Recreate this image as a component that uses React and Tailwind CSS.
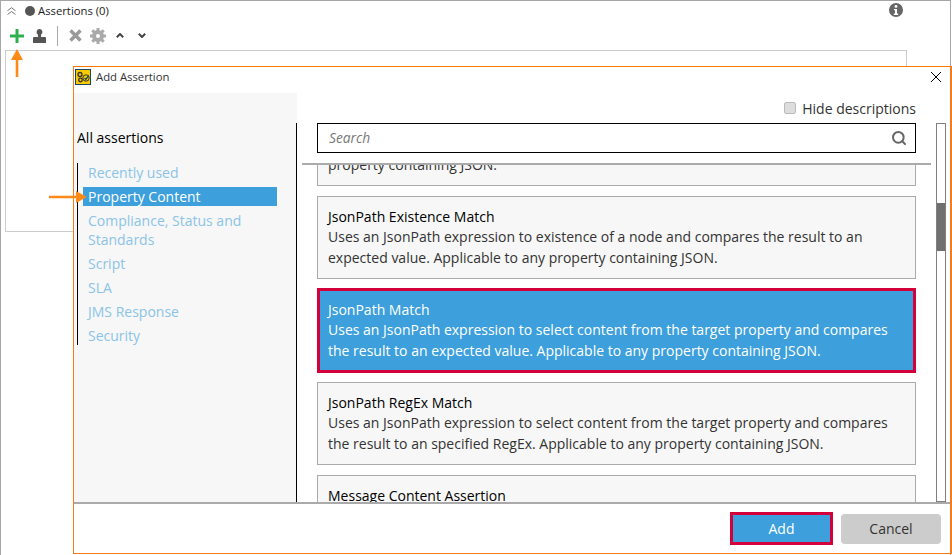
import React from 'react';
import { Search } from 'lucide-react';

const categories = [
  { label: 'Recently used' },
  { label: 'Property Content', active: true },
  { label: 'Compliance, Status and Standards' },
  { label: 'Script' },
  { label: 'SLA' },
  { label: 'JMS Response' },
  { label: 'Security' },
];

const AssertionCard = ({ title, lines = [], selected, className = '' }) => (
  <div className={`shrink-0 ${selected ? 'border-[3px] border-[#d3003b] bg-[#3d9fdb] pb-[9px] pl-[8px] pt-[9px] text-white' : 'border border-[#aaaaaa] bg-[#f7f7f7] pb-[10px] pl-[10px] pt-[10px] text-[#333333]'} ${className}`}>
    {title && <div className={`text-[14px] leading-[20px] ${selected ? 'font-medium' : 'text-black'}`}>{title}</div>}
    {lines.map((line) => (
      <div key={line} className="whitespace-nowrap text-[14px] leading-[20.5px]">{line}</div>
    ))}
  </div>
);

const App = () => {
  return (
    <div className="relative h-[555px] w-[952px] overflow-hidden bg-white font-['Open_Sans',sans-serif]">
      <div className="h-[555px] w-[951px] border-x border-t border-[#a6a6a6]">
        <div className="flex h-[20px] items-center pl-[6px]">
          <svg viewBox="0 0 9 8" className="h-[8px] w-[9px]">
            <path d="M.5 3.700L4.500 .7l4 3M.5 7.500l4-3 4 3" stroke="#777777" strokeWidth="1" fill="none" />
          </svg>
          <span className="ml-[9px] h-[10px] w-[10px] rounded-full bg-[#555555]" />
          <span className="ml-[3px] text-[11.3px] text-[#222222]">Assertions (0)</span>
        </div>

        <div className="flex h-[29px] items-center pl-[9px]">
          <svg viewBox="0 0 14 14" className="h-[14px] w-[14px]">
            <path d="M5.500 0h3v5.500H14v3H8.500V14h-3V8.500H0v-3h5.500z" fill="#2fb04f" />
          </svg>
          <svg viewBox="0 0 13 14" className="ml-[9px] h-[14px] w-[13px]">
            <path d="M6.500 0a3 3 0 0 1 1.600 5.500V8H12a1 1 0 0 1 1 1v5H0V9a1 1 0 0 1 1-1h3.900V5.500A3 3 0 0 1 6.500 0z" fill="#555555" />
          </svg>
          <span className="ml-[11px] h-[20px] w-px bg-[#aaaaaa]" />
          <svg viewBox="0 0 13 13" className="ml-[11px] h-[13px] w-[13px]">
            <path d="M1.500 1.500l10 10M11.500 1.500l-10 10" stroke="#999999" strokeWidth="3.400" fill="none" />
          </svg>
          <svg viewBox="0 0 16 16" className="ml-[8px] h-[16px] w-[16px]">
            <circle cx="8" cy="8" r="4" fill="none" stroke="#aaaaaa" strokeWidth="4" />
            <path d="M8 0v4M8 12v4M0 8h4M12 8h4M2.300 2.300l2.800 2.800M10.900 10.900l2.800 2.800M13.700 2.300l-2.800 2.800M5.100 10.900l-2.800 2.800" stroke="#aaaaaa" strokeWidth="3" />
          </svg>
          <svg viewBox="0 0 8 5" className="ml-[10px] h-[5px] w-[8px]">
            <path d="M.8 4.200L4 1l3.200 3.200" stroke="#444444" strokeWidth="2" fill="none" />
          </svg>
          <svg viewBox="0 0 8 5" className="ml-[14px] h-[5px] w-[8px]">
            <path d="M.8 .8L4 4l3.200-3.200" stroke="#444444" strokeWidth="2" fill="none" />
          </svg>
        </div>

        <div className="ml-[4px] h-[182px] w-[902px] border border-[#cccccc]" />
      </div>

      <svg viewBox="0 0 14 14" className="absolute left-[889px] top-[3px] h-[14px] w-[14px]">
        <circle cx="7" cy="7" r="7" fill="#666666" />
        <circle cx="7" cy="3.400" r="1.400" fill="#ffffff" />
        <path d="M5 6h3v4.500h1.200V12H4.800v-1.500H6V7.300H5z" fill="#ffffff" />
      </svg>

      <svg viewBox="0 0 12 28" className="absolute left-[11px] top-[49px] h-[28px] w-[12px]">
        <path d="M6 0l6 11H7.300v17H4.700V11H0z" fill="#ff8a17" />
      </svg>

      <div className="absolute left-[73px] top-[66px] flex h-[488px] w-[879px] flex-col border border-r-2 border-[#f57b1f] border-t-[#ff7a00] bg-white">
        <div className="flex h-[26px] shrink-0 items-center pb-[6px] pl-[1px]">
          <svg viewBox="0 0 16 16" className="h-[16px] w-[16px]">
            <rect x=".5" y=".5" width="15" height="15" fill="#f7cb00" stroke="#1c4a5c" />
            <circle cx="5" cy="5.500" r="2" fill="none" stroke="#333333" strokeWidth="1.300" />
            <circle cx="5.500" cy="11" r="1.800" fill="none" stroke="#333333" strokeWidth="1.300" />
            <circle cx="11" cy="9" r="3.200" fill="none" stroke="#333333" strokeWidth="1" />
            <path d="M9.500 9l1.300 1.500 3-4" stroke="#1c4a5c" strokeWidth="1.300" fill="none" />
          </svg>
          <span className="ml-[5px] text-[11.3px] text-[#333333]">Add Assertion</span>
          <svg viewBox="0 0 10 10" className="ml-auto mr-[9px] h-[10px] w-[10px]">
            <path d="M0 0l10 10M10 0L0 10" stroke="#000000" strokeWidth="1" fill="none" />
          </svg>
        </div>

        <div className="flex min-h-0 flex-1">
          <div className="relative w-[223px] shrink-0 bg-[#f7f7f7] pl-[3px] pt-[35px]">
            <div className="text-[14px] leading-[20px] text-black">All assertions</div>
            <div className="mt-[15px] flex flex-col gap-[5px] border-l border-black pl-[5px]">
              {categories.map((cat) => (
                <div
                  key={cat.label}
                  className={`w-[194px] pl-[5px] text-[14px] leading-[19px] ${cat.active ? 'bg-[#3d9fdb] text-white' : 'text-[#8bc4e8]'}`}
                >
                  {cat.label}
                </div>
              ))}
            </div>
            <span className="absolute bottom-0 right-[0px] top-[30px] w-px bg-black" />
          </div>

          <div className="flex min-h-0 w-[653px] flex-col">
            <div className="flex h-[30px] shrink-0 items-center justify-end pr-[34px]">
              <span className="mb-[1px] h-[12px] w-[12px] rounded-[2px] border border-[#bbbbbb] bg-[#dddddd]" />
              <span className="ml-[6px] pt-[2px] text-[14px] leading-[20px] text-[#333333]">Hide descriptions</span>
            </div>

            <div className="flex min-h-0 flex-1 gap-[5px] pl-[5px] pr-[4px]">
              <div className="flex min-h-0 w-[629px] flex-col">
                <div className="mx-[15px] flex h-[30px] shrink-0 items-center justify-between border border-black pl-[11px] pr-[8px]">
                  <span className="text-[13.8px] italic leading-[18px] text-[#777777]">Search</span>
                  <Search className="h-[16px] w-[16px] text-[#666666]" strokeWidth={3} />
                </div>
                <div className="mt-[10px] flex min-h-0 flex-1 flex-col overflow-hidden border-t-2 border-[#aaaaaa] px-[15px]">
                  <AssertionCard
                    className="mb-[10px] mt-[-21.5px]"
                    lines={['property containing JSON.']}
                  />
                  <AssertionCard
                    className="mb-[9px]"
                    title="JsonPath Existence Match"
                    lines={['Uses an JsonPath expression to existence of a node and compares the result to an', 'expected value. Applicable to any property containing JSON.']}
                  />
                  <AssertionCard
                    selected
                    className="mb-[9px]"
                    title="JsonPath Match"
                    lines={['Uses an JsonPath expression to select content from the target property and compares', 'the result to an expected value. Applicable to any property containing JSON.']}
                  />
                  <AssertionCard
                    className="mb-[10px]"
                    title="JsonPath RegEx Match"
                    lines={['Uses an JsonPath expression to select content from the target property and compares', 'the result to an specified RegEx. Applicable to any property containing JSON.']}
                  />
                  <AssertionCard title="Message Content Assertion" />
                </div>
              </div>
              <div className="w-[10px] border border-[#808080] pt-[79px]">
                <div className="h-[48px] bg-[#707070]" />
              </div>
            </div>
          </div>
        </div>

        <div className="flex h-[51px] shrink-0 items-center justify-end gap-[8px] border-t-2 border-[#aaaaaa] pr-[9px]">
          <button className="h-[33px] w-[103px] border-[3px] border-[#d3003b] bg-[#3d9fdb] text-[14px] text-white">Add</button>
          <button className="h-[30px] w-[100px] rounded-[4px] bg-[#cccccc] text-[14px] text-[#333333]">Cancel</button>
        </div>
      </div>

      <svg viewBox="0 0 38 12" className="absolute left-[49px] top-[191px] h-[12px] w-[38px]">
        <path d="M38 6L27 12V7.200H0V4.800h27V0z" fill="#ff8a17" />
      </svg>
    </div>
  );
};

export default App;
